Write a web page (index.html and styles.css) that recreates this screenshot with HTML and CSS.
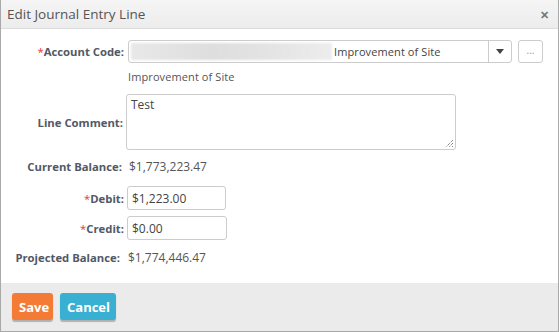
FILE: index.html
```html
<!DOCTYPE html>
<html>
<head>
<meta charset="utf-8">
<link rel="stylesheet" href="styles.css">
</head>
<body>
<div class="dialog">
  <div class="header">
    <span class="title">Edit Journal Entry Line</span>
    <span class="close">&#x2715;</span>
  </div>
  <div class="content">
    <div class="row row-account">
      <label class="label"><span class="req">*</span>Account Code:</label>
      <div class="field">
        <div class="select">
          <div class="select-text"><span class="blur"></span><span class="select-name">Improvement of Site</span></div>
          <div class="select-arrow"><span class="tri"></span></div>
        </div>
        <div class="dots">...</div>
      </div>
    </div>
    <div class="row row-desc">
      <span class="label"></span>
      <span class="desc">Improvement of Site</span>
    </div>
    <div class="row row-comment">
      <label class="label">Line Comment:</label>
      <div class="textarea">Test<svg class="grip" width="9" height="9" viewBox="0 0 9 9"><path d="M8 1L1 8M8 4L4 8M8 7L7 8" stroke="#555" stroke-width="1" stroke-dasharray="1 1"/></svg></div>
    </div>
    <div class="row row-cur">
      <span class="label">Current Balance:</span>
      <span class="value">$1,773,223.47</span>
    </div>
    <div class="row row-debit">
      <label class="label"><span class="req">*</span>Debit:</label>
      <div class="input">$1,223.00</div>
    </div>
    <div class="row row-credit">
      <label class="label"><span class="req">*</span>Credit:</label>
      <div class="input">$0.00</div>
    </div>
    <div class="row row-proj">
      <span class="label">Projected Balance:</span>
      <span class="value">$1,774,446.47</span>
    </div>
  </div>
  <div class="footer">
    <button class="btn btn-save">Save</button>
    <button class="btn btn-cancel">Cancel</button>
  </div>
</div>
</body>
</html>
```
FILE: styles.css
```css
* { box-sizing: border-box; }
html, body { margin: 0; padding: 0; width: 559px; height: 332px; overflow: hidden; background: #fff; }
body { font-family: "Open Sans", "Noto Sans", sans-serif; font-size: 12px; color: #555; }
.dialog { width: 559px; height: 332px; border: 1px solid #a9a9a9; border-top: 0; display: flex; flex-direction: column; }
.header { height: 29px; flex: none; background: linear-gradient(#f5f5f5, #ececec); border-bottom: 1px solid #dcdcdc; display: flex; align-items: center; justify-content: space-between; padding: 0 9px 0 6px; }
.title { font-size: 13.5px; color: #555; }
.close { font-size: 11px; color: #777; font-weight: bold; }
.content { flex: 1; padding-top: 11px; }
.row { display: flex; align-items: center; }
.label { width: 124px; flex: none; text-align: right; font-weight: bold; color: #525966; padding-right: 1px; font-size: 11.3px; }
.req { color: #e0393e; font-weight: normal; }
.field { display: flex; gap: 6px; margin-left: 3px; }
.row-account { height: 22px; }
.select { width: 384px; height: 23px; border: 1px solid #ccc; border-radius: 3px; display: flex; }
.select-text { flex: 1; display: flex; align-items: center; padding-left: 2px; }
.blur { width: 201px; height: 17px; background: linear-gradient(90deg, #e8e8e8, #dedede 40%, #e4e4e4 70%, #ededed); filter: blur(1px); margin-right: 2px; }
.select-name { color: #444; font-size: 11px; letter-spacing: 0.1px; }
.select-arrow { width: 23px; border-left: 1px solid #ccc; display: flex; align-items: center; justify-content: center; }
.tri { width: 0; height: 0; border-left: 4px solid transparent; border-right: 4px solid transparent; border-top: 5px solid #444; }
.dots { width: 25px; height: 23px; border: 1px solid #ccc; border-radius: 3px; text-align: center; line-height: 19px; color: #999; font-size: 10px; }
.row-desc { margin-top: 5px; height: 18px; }
.desc { color: #555; margin-left: 3px; font-size: 11px; letter-spacing: 0.1px; }
.row-comment { margin-top: 9px; }
.row-comment .label { padding-right: 2px; }
.textarea { width: 330px; height: 56px; border: 1px solid #ccc; border-radius: 3px; position: relative; padding: 1px 4px; color: #444; margin-left: 1px; }
.grip { position: absolute; right: 1px; bottom: 1px; }
.row-cur { margin-top: 6px; height: 20px; }
.row-cur .label { padding-right: 3px; }
.value { margin-left: 4px; color: #555; }
.row-debit { margin-top: 10px; }
.input { width: 99px; height: 24px; border: 1px solid #ccc; border-radius: 3px; padding: 3px 4px; color: #444; margin-left: 2px; }
.row-credit { margin-top: 6px; }
.row-credit .input { width: 100px; height: 24px; }
.row-proj { margin-top: 7px; height: 20px; }
.row-proj .label { padding-right: 5px; }
.row-proj .value { margin-left: 3px; }
.footer { height: 48px; flex: none; background: #ebebeb; display: flex; align-items: flex-start; gap: 7px; padding: 10px 0 0 11px; }
.btn { border: 0; border-radius: 3px; color: #fff; font-family: "Open Sans", sans-serif; font-weight: bold; font-size: 13px; height: 27px; padding: 0 7px; box-shadow: 0 2px 1px rgba(0,0,0,0.25); }
.btn-save { background: #f47b35; width: 41px; }
.btn-cancel { background: #39b0d1; width: 56px; }
```
